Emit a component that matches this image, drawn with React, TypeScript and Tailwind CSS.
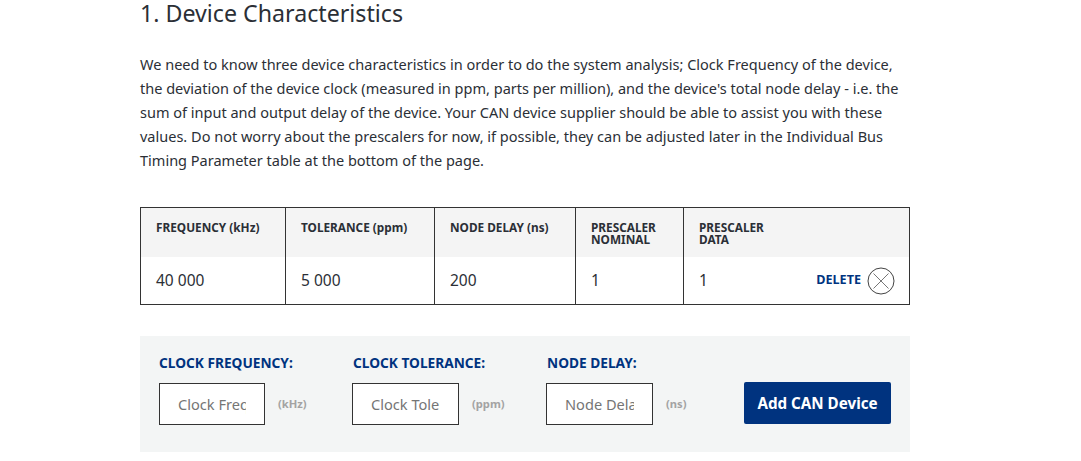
export default function App() {
  const f = "[font-family:'Noto_Sans',sans-serif]";
  const fields = [
    { label: "CLOCK FREQUENCY:", ph: "Clock Frequency", unit: "(kHz)", w: "w-[193px]", iw: "w-[106px]", lm: "ml-0" },
    { label: "CLOCK TOLERANCE:", ph: "Clock Tolerance", unit: "(ppm)", w: "w-[194px]", iw: "w-[107px]", lm: "ml-[1px]" },
    { label: "NODE DELAY:", ph: "Node Delay", unit: "(ns)", w: "w-[198px]", iw: "w-[107px]", lm: "ml-[1px]" },
  ];
  const cols = [
    { h: ["FREQUENCY (kHz)"], v: "40 000", w: "w-[145px]" },
    { h: ["TOLERANCE (ppm)"], v: "5 000", w: "w-[149px]" },
    { h: ["NODE DELAY (ns)"], v: "200", w: "w-[141px]" },
    { h: ["PRESCALER", "NOMINAL"], v: "1", w: "w-[108px]" },
  ];
  return (
    <div className={`${f} h-[461px] w-[1081px] overflow-hidden bg-white text-[#2b2f36]`}>
      <div className="ml-[140px] w-[770px]">
        <h2 className="h-[26px] text-[23.2px] leading-[26px]">1. Device Characteristics</h2>
        <p className="mt-[26px] w-[770px] text-[14.52px] leading-[24px]">
          We need to know three device characteristics in order to do the system analysis; Clock Frequency of the device,
          <br />
          the deviation of the device clock (measured in ppm, parts per million), and the device's total node delay - i.e. the
          <br />
          sum of input and output delay of the device. Your CAN device supplier should be able to assist you with these
          <br />
          values. Do not worry about the prescalers for now, if possible, they can be adjusted later in the Individual Bus
          <br />
          Timing Parameter table at the bottom of the page.
        </p>
        <div className="mt-[35px] flex h-[98px] border border-[#333333]">
          {cols.map((c) => (
            <div key={c.v + c.w} className={`${c.w} shrink-0 border-r border-[#333333]`}>
              <div className="h-[49px] bg-[#f4f4f4] pl-[15px] pt-[13px] text-[11.8px] font-bold leading-[12px]">
                {c.h.map((l) => (
                  <div key={l}>{l}</div>
                ))}
              </div>
              <div className="pl-[15px] pt-[13px] text-[15.5px] leading-[20px]">{c.v}</div>
            </div>
          ))}
          <div className="flex-1">
            <div className="h-[49px] bg-[#f4f4f4] pl-[15px] pt-[13px] text-[11.8px] font-bold leading-[12px]">
              <div>PRESCALER</div>
              <div>DATA</div>
            </div>
            <div className="flex h-[47px] items-center justify-between pl-[15px] pr-[14px]">
              <span className="-mt-[2px] text-[15.5px] leading-[20px]">1</span>
              <span className="flex items-center gap-[6px]">
                <span className="text-[12.6px] font-bold text-[#00337f]">DELETE</span>
                <svg width="28" height="28" viewBox="0 0 28 28" fill="none" stroke="#444444">
                  <circle cx="14" cy="14" r="13" />
                  <path d="M6.5 6.5 21.5 21.5M21.5 6.5 6.5 21.5" stroke="#777777" />
                </svg>
              </span>
            </div>
          </div>
        </div>
        <div className="mt-[31px] flex h-[116px] bg-[#f3f5f5] pl-[19px] pt-[18px]">
          {fields.map((x) => (
            <div key={x.label} className={`${x.w} shrink-0`}>
              <div className={`${x.lm} h-[17px] text-[13.7px] font-bold leading-[17px] text-[#00337f]`}>{x.label}</div>
              <div className="mt-[12px] flex items-center">
                <input
                  readOnly
                  placeholder={x.ph}
                  className={`${x.iw} h-[42px] border border-[#333333] bg-white px-[18px] text-[14.6px] outline-none placeholder:text-[#757575]`}
                />
                <span className="ml-[13px] text-[11.2px] font-bold text-[#a3a3a3]">{x.unit}</span>
              </div>
            </div>
          ))}
          <button className="mt-[28px] h-[42px] w-[147px] rounded-[2px] bg-[#00337f] text-[15.2px] font-bold text-white">
            Add CAN Device
          </button>
        </div>
      </div>
    </div>
  );
}
